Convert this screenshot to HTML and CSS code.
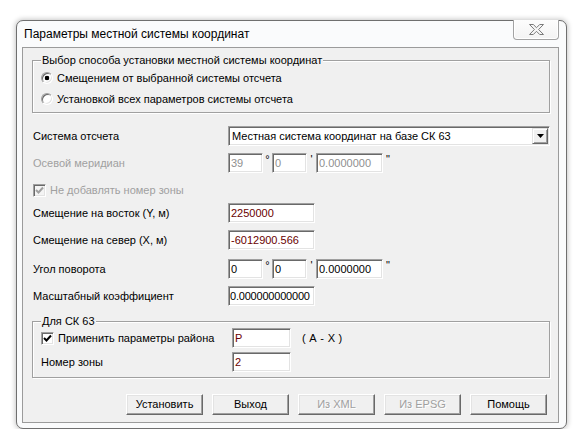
FILE: index.html
```html
<!DOCTYPE html>
<html lang="ru">
<head>
<meta charset="utf-8">
<title>Параметры местной системы координат</title>
<link rel="stylesheet" href="styles.css">
</head>
<body>
<div class="window">
  <div class="titlebar">
    <span class="title">Параметры местной системы координат</span>
    <div class="close">
      <svg width="15" height="11" viewBox="0 0 15 11"><polygon points="0.5,0.5 4.3,0.5 7.5,3.7 10.7,0.5 14.5,0.5 9.6,5.5 14.5,10.5 10.7,10.5 7.5,7.3 4.3,10.5 0.5,10.5 5.4,5.5" fill="#f6f6f6" stroke="#7a7a7a" stroke-width="1"/></svg>
    </div>
  </div>
  <div class="client">
    <fieldset class="group g1">
      <legend>Выбор способа установки местной системы координат</legend>
      <div class="opt"><span class="radio checked"></span><span>Смещением от выбранной системы отсчета</span></div>
      <div class="opt"><span class="radio"></span><span>Установкой всех параметров системы отсчета</span></div>
    </fieldset>

    <div class="form">
      <div class="row r-sys">
        <span class="label">Система отсчета</span>
        <div class="combo">
          <span class="combo-text">Местная система координат на базе СК 63</span>
          <span class="combo-btn"><svg width="7" height="4" viewBox="0 0 7 4"><polygon points="0,0 7,0 3.5,4" fill="#000"/></svg></span>
        </div>
      </div>
      <div class="row r-mer dis">
        <span class="label">Осевой меридиан</span>
        <span class="field f-deg">39</span><span class="mark">°</span>
        <span class="field f-min">0</span><span class="mark">'</span>
        <span class="field f-sec">0.0000000</span><span class="mark m-last">"</span>
      </div>
      <div class="row r-chk dis">
        <span class="check"><svg width="9" height="9" viewBox="0 0 9 9"><polyline points="1,4 3.5,6.5 8,1.5" fill="none" stroke="#a0a0a0" stroke-width="2"/></svg></span>
        <span>Не добавлять номер зоны</span>
      </div>
      <div class="row r-east">
        <span class="label">Смещение на восток (Y, м)</span>
        <span class="field f-wide val">2250000</span>
      </div>
      <div class="row r-north">
        <span class="label">Смещение на север (X, м)</span>
        <span class="field f-wide val">-6012900.566</span>
      </div>
      <div class="row r-ang">
        <span class="label">Угол поворота</span>
        <span class="field f-deg">0</span><span class="mark">°</span>
        <span class="field f-min">0</span><span class="mark">'</span>
        <span class="field f-sec">0.0000000</span><span class="mark m-last">"</span>
      </div>
      <div class="row r-scale">
        <span class="label">Масштабный коэффициент</span>
        <span class="field f-wide f-tight">0.000000000000</span>
      </div>
    </div>

    <fieldset class="group g2">
      <legend>Для СК 63</legend>
      <div class="row r-area">
        <span class="label2">
          <span class="check on"><svg width="9" height="9" viewBox="0 0 9 9"><polyline points="1,4 3.5,6.5 8,1.5" fill="none" stroke="#000" stroke-width="2"/></svg></span>
          <span>Применить параметры района</span>
        </span>
        <span class="field f-small val">Р</span>
        <span class="hint">( А - Х )</span>
      </div>
      <div class="row r-zone">
        <span class="label2">Номер зоны</span>
        <span class="field f-small val">2</span>
      </div>
    </fieldset>

    <div class="buttons">
      <span class="btn">Установить</span>
      <span class="btn">Выход</span>
      <span class="btn off">Из XML</span>
      <span class="btn off">Из EPSG</span>
      <span class="btn">Помощь</span>
    </div>
  </div>
</div>
</body>
</html>
```
FILE: styles.css
```css
body {
  margin: 0;
  background: #ffffff;
  font-family: "Liberation Sans", Arial, sans-serif;
  font-size: 11px;
  color: #000;
}

.window {
  box-sizing: border-box;
  width: 551px;
  height: 409px;
  margin: 20px 0 0 16px;
  border: 1px solid #6f6f6f;
  border-radius: 7px;
  background: #fafbfc;
  box-shadow: 0 0 5px 1px rgba(0, 0, 0, 0.22);
  padding: 0 7px 5px 5px;
  display: flex;
  flex-direction: column;
}

.titlebar {
  height: 26px;
  flex: none;
  display: flex;
  align-items: center;
}

.title {
  font-size: 12px;
  padding-left: 2px;
  padding-bottom: 1px;
}

.close {
  margin-left: auto;
  align-self: flex-start;
  margin-top: -1px;
  width: 46px;
  height: 20px;
  box-sizing: border-box;
  border: 1px solid #a3a3a3;
  border-top: none;
  border-radius: 0 0 4px 4px;
  background: linear-gradient(#fdfdfd, #f3f3f3);
  box-shadow: inset 0 -1px 0 #fff, inset 1px 0 0 #fff, inset -1px 0 0 #fff;
  display: flex;
  align-items: center;
  justify-content: center;
}

.client {
  flex: 1;
  border: 1px solid #9b9b9b;
  background: #f0f0f0;
  display: flex;
  flex-direction: column;
}

.group {
  margin: 6px 8px 0 9px;
  padding: 0 8px 3px 8px;
  border: 1px solid #a0a0a0;
  box-shadow: inset 1px 1px 0 #fff, 1px 1px 0 #fff;
  min-width: 0;
}

.group legend {
  padding: 0 1px;
  line-height: 13px;
  background: #f0f0f0;
  position: relative;
}

.opt {
  height: 21px;
  display: flex;
  align-items: center;
  gap: 4px;
}

.radio {
  box-sizing: border-box;
  width: 12px;
  height: 12px;
  border-radius: 50%;
  border: 1px solid;
  border-color: #a0a0a0 #ffffff #ffffff #a0a0a0;
  box-shadow: inset 1px 1px 0 #696969, inset -1px -1px 0 #e3e3e3;
  background: #fff;
  flex: none;
}

.radio.checked {
  background: radial-gradient(circle, #000 0 2px, #fff 2.6px);
}

.form {
  padding-left: 10px;
}

.row {
  display: flex;
  align-items: center;
  height: 20px;
}

.label {
  width: 195px;
  flex: none;
}

.r-sys { margin-top: 13px; }
.r-mer { margin-top: 7px; }
.r-chk { margin-top: 7px; gap: 4px; }
.r-east { margin-top: 3px; }
.r-north { margin-top: 7px; }
.r-ang { margin-top: 9px; }
.r-scale { margin-top: 7px; }

.dis { color: #a0a0a0; }

.field {
  box-sizing: border-box;
  height: 20px;
  border: 1px solid;
  border-color: #a0a0a0 #ffffff #ffffff #a0a0a0;
  box-shadow: inset 1px 1px 0 #696969, inset -1px -1px 0 #e3e3e3;
  background: #fff;
  padding: 0 0 0 2px;
  line-height: 18px;
  flex: none;
  white-space: nowrap;
  overflow: hidden;
}

.dis .field { color: #8f8f8f; }
.val { color: #6a0000; }

.f-deg { width: 35px; }
.f-min { width: 35px; }
.f-sec { width: 67px; }
.f-wide { width: 87px; }
.f-small { width: 59px; }
.f-tight { padding-left: 1px; letter-spacing: -0.2px; }

.mark {
  width: 9px;
  text-align: center;
  align-self: flex-start;
  line-height: 12px;
  color: #000;
}
.dis .mark { color: #000; }
.m-last { width: auto; margin-left: 3px; }

.combo {
  box-sizing: border-box;
  width: 322px;
  height: 20px;
  border: 1px solid;
  border-color: #a0a0a0 #ffffff #ffffff #a0a0a0;
  box-shadow: inset 1px 1px 0 #696969, inset -1px -1px 0 #e3e3e3;
  background: #fff;
  display: flex;
  align-items: center;
  padding: 1px 1px 1px 3px;
}

.combo-text {
  flex: 1;
  white-space: nowrap;
}

.combo-btn {
  box-sizing: border-box;
  width: 16px;
  height: 16px;
  background: #f0f0f0;
  border: 1px solid;
  border-color: #e3e3e3 #696969 #696969 #e3e3e3;
  box-shadow: inset 1px 1px 0 #fff, inset -1px -1px 0 #a0a0a0;
  display: flex;
  align-items: center;
  justify-content: center;
}

.check {
  box-sizing: border-box;
  width: 13px;
  height: 13px;
  border: 1px solid;
  border-color: #a0a0a0 #ffffff #ffffff #a0a0a0;
  box-shadow: inset 1px 1px 0 #696969, inset -1px -1px 0 #e3e3e3;
  background: #f4f4f4;
  display: flex;
  align-items: center;
  justify-content: center;
  flex: none;
}

.check.on { background: #fff; }

.g2 {
  margin-top: 9px;
  padding-bottom: 5px;
}

.label2 {
  width: 191px;
  flex: none;
  display: flex;
  align-items: center;
  gap: 4px;
}

.r-zone { margin-top: 4px; }

.hint {
  margin-left: 11px;
  letter-spacing: 0.3px;
}

.buttons {
  margin-top: 16px;
  padding-right: 11px;
  display: flex;
  justify-content: flex-end;
  gap: 9px;
}

.btn {
  box-sizing: border-box;
  width: 77px;
  height: 21px;
  border: 1px solid;
  border-color: #ffffff #696969 #696969 #ffffff;
  box-shadow: inset -1px -1px 0 #a0a0a0, inset 1px 1px 0 #e3e3e3;
  background: #f0f0f0;
  display: flex;
  align-items: center;
  justify-content: center;
  padding-bottom: 1px;
}

.btn.off {
  color: #a0a0a0;
  text-shadow: 1px 1px 0 #fff;
}
```
